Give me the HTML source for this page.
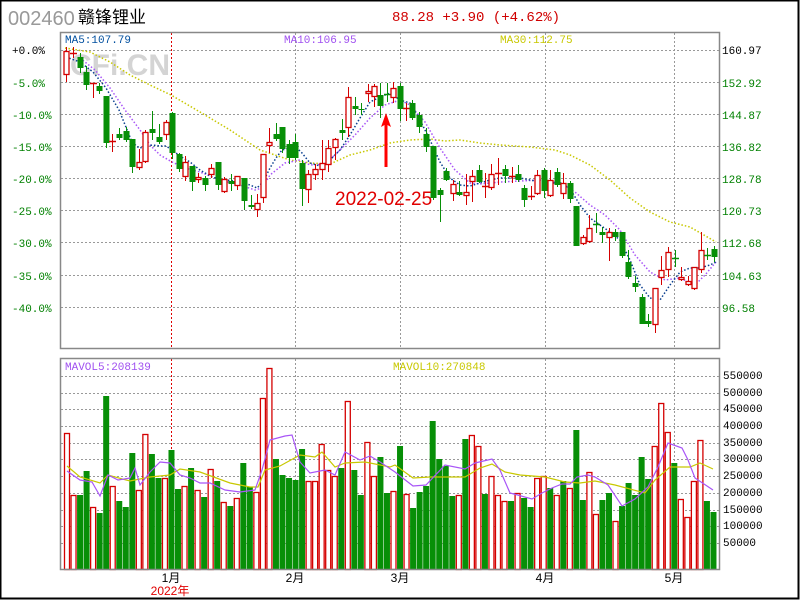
<!DOCTYPE html>
<html><head><meta charset="utf-8"><style>
html,body{margin:0;padding:0;background:#fff;}
body{width:800px;height:600px;overflow:hidden;position:relative;font-family:"Liberation Mono",monospace;}
</style></head><body>
<svg id="s" width="800" height="600" style="position:absolute;left:0;top:0" xmlns="http://www.w3.org/2000/svg">
<rect x="0.5" y="0.5" width="798" height="598" fill="#fff" stroke="#000" stroke-width="2"/>
<g id="grid"></g>
<text x="70" y="75" font-family="Liberation Sans,sans-serif" font-weight="bold" font-size="30" fill="#d4d4d4">CFi.CN</text>
<g id="ma"></g>
<g id="c"></g>
<g id="v"></g>
<rect x="60.5" y="32.5" width="659" height="316" fill="none" stroke="#888" stroke-width="1.5"/>
<rect x="60.5" y="358.5" width="659" height="211" fill="none" stroke="#888" stroke-width="1.5"/>
<text x="335" y="205" font-family="Liberation Sans,sans-serif" font-size="19" fill="#e00000">2022-02-25</text>
<polygon points="386,113 381,127 384.5,125 384.5,167 387.5,167 387.5,125 391,127" fill="#ff0000"/>
<text x="65" y="43" font-size="11" fill="#004f9f">MA5:107.79</text>
<text x="284" y="43" font-size="11" fill="#a050f0">MA10:106.95</text>
<text x="500" y="43" font-size="11" fill="#c8c800">MA30:112.75</text>
<text x="65" y="370" font-size="11" fill="#a050f0">MAVOL5:208139</text>
<text x="393" y="370" font-size="11" fill="#c8c800">MAVOL10:270848</text>
<g font-size="11" fill="#008000">
<text x="12" y="54" fill="#000">+0.0%</text>
<text x="12" y="87">-5.0%</text>
<text x="12" y="119">-10.0%</text>
<text x="12" y="151">-15.0%</text>
<text x="12" y="183">-20.0%</text>
<text x="12" y="215">-25.0%</text>
<text x="12" y="247">-30.0%</text>
<text x="12" y="280">-35.0%</text>
<text x="12" y="312">-40.0%</text>
<text x="722" y="54" fill="#000">160.97</text>
<text x="722" y="87">152.92</text>
<text x="722" y="119">144.87</text>
<text x="722" y="151">136.82</text>
<text x="722" y="183">128.78</text>
<text x="722" y="215">120.73</text>
<text x="722" y="247">112.68</text>
<text x="722" y="280">104.63</text>
<text x="722" y="312">96.58</text>
</g>
<g font-size="11" fill="#000">
<text x="723" y="379">550000</text>
<text x="723" y="396">500000</text>
<text x="723" y="412">450000</text>
<text x="723" y="429">400000</text>
<text x="723" y="446">350000</text>
<text x="723" y="462">300000</text>
<text x="723" y="479">250000</text>
<text x="723" y="496">200000</text>
<text x="723" y="513">150000</text>
<text x="723" y="529">100000</text>
<text x="723" y="546">50000</text>
</g>
<g font-family="Liberation Sans,'Noto Sans CJK SC',sans-serif" font-size="12" fill="#000" text-anchor="middle">
<text x="171" y="582">1月</text>
<text x="295" y="582">2月</text>
<text x="400" y="582">3月</text>
<text x="545" y="582">4月</text>
<text x="674" y="582">5月</text>
<text x="170" y="595" fill="#e00000">2022年</text>
</g>
<text x="8" y="25" font-family="Liberation Sans,sans-serif" font-size="20" fill="#999">002460</text>
<text x="78" y="23" font-family="Liberation Sans,'Noto Sans CJK SC',sans-serif" font-size="17" fill="#000">赣锋锂业</text>
<text x="392" y="21" font-size="14" fill="#d00000">88.28 +3.90 (+4.62%)</text>
</svg>
<script>
var NS="http://www.w3.org/2000/svg";
function el(p,t,a){var e=document.createElementNS(NS,t);for(var k in a)e.setAttribute(k,a[k]);document.getElementById(p).appendChild(e);return e;}
var R="#d40000",G="#078f07";
[50,82,114,146,178,210,242,275,307].forEach(function(y){el("grid","line",{x1:61,x2:719,y1:y+.5,y2:y+.5,stroke:"#999","stroke-dasharray":"2,2"});});
[376,393,409,426,443,459,476,493,510,526,543].forEach(function(y){el("grid","line",{x1:61,x2:719,y1:y+.5,y2:y+.5,stroke:"#999","stroke-dasharray":"2,2"});});
[295,400,545,674].forEach(function(x){el("grid","line",{x1:x+.5,x2:x+.5,y1:33,y2:348,stroke:"#999","stroke-dasharray":"2,2"});el("grid","line",{x1:x+.5,x2:x+.5,y1:359,y2:569,stroke:"#999","stroke-dasharray":"2,2"});});
el("grid","line",{x1:171.5,x2:171.5,y1:33,y2:348,stroke:"#d00","stroke-dasharray":"2,2"});
el("grid","line",{x1:171.5,x2:171.5,y1:359,y2:569,stroke:"#d00","stroke-dasharray":"2,2"});
var C=[[66,51,74,47,82,1],[73,53,53,47,58,1],[80,57,68,53,73,0],[86,72,85,66,90,0],[93,83,83,83,98,1],[99,86,91,83,94,0],[106,96,143,96,148,0],[112,141,141,134,152,1],[119,134,138,128,140,0],[126,131,140,127,142,0],[132,139,167,139,173,0],[139,162,167,149,170,1],[145,132,161,130,163,1],[152,129,133,111,140,0],[159,137,142,124,144,0],[166,122,134,120,140,1],[172,113,153,112,159,0],[179,154,169,153,172,0],[185,162,176,156,181,1],[192,166,182,166,191,0],[198,177,179,173,183,1],[205,178,185,176,191,0],[211,168,174,164,178,1],[218,162,185,162,190,0],[224,179,191,177,193,1],[231,181,184,174,191,0],[237,176,185,176,190,1],[244,178,201,178,210,0],[251,205,207,195,209,0],[257,203,209,194,217,1],[263,154,197,154,203,1],[269,142,145,128,153,1],[276,134,139,123,141,0],[282,127,149,127,153,0],[289,144,158,140,164,0],[295,142,158,134,160,0],
[302,163,189,160,206,0],[308,174,189,170,203,1],[315,169,174,164,180,1],[322,163,169,140,180,1],[328,148,164,140,172,1],[335,139,147,138,160,1],[342,130,133,119,140,0],[348,97,127,87,137,1],[355,106,109,97,115,0],[361,109,110,103,115,0],[368,91,93,84,102,1],[374,86,96,84,107,1],[380,95,106,83,118,0],[387,94,94,83,102,0],[393,88,97,82,103,1],[400,86,109,83,121,0],[406,108,108,103,121,1],[412,103,118,100,120,0],[419,115,127,112,133,0],[426,134,147,128,152,0],[433,146,198,146,200,0],[440,190,195,188,222,0],[446,171,180,168,181,0],[453,184,193,180,201,1],[459,192,195,181,196,0],[466,192,195,174,205,1],[472,176,181,170,202,1],[479,170,182,165,183,0],[485,186,186,173,198,1],[491,174,187,164,190,1],[498,173,173,158,185,1],[505,169,176,165,183,0],[512,176,176,167,183,1],[518,174,180,165,182,0],[524,188,200,185,207,0],[531,196,196,186,200,1],[537,175,193,170,195,1],[544,170,191,168,198,0],[550,180,195,170,197,1],[557,172,185,168,187,0],
[563,183,193,173,199,1],[570,183,199,181,203,0],[576,206,246,206,246,0],[583,237,243,235,245,1],[589,228,241,215,243,1],[596,224,224,213,233,0],[602,232,235,227,243,0],[609,232,237,228,261,1],[615,232,237,229,241,0],[622,232,256,232,258,0],[628,262,277,250,279,0],[635,283,287,276,292,0],[642,297,324,294,324,0],[648,321,324,314,327,0],[655,288,324,288,333,1],[661,270,277,256,285,1],[668,252,269,247,277,1],[675,258,258,250,267,0],[681,277,279,267,281,1],[688,281,284,276,286,1],[694,267,288,267,290,1],[701,250,269,232,273,1],[707,255,255,248,260,0],[714,249,257,246,262,0]];
C.forEach(function(c){var col=c[5]?R:G;
 if(c[5]){el("c","line",{x1:c[0]+.5,x2:c[0]+.5,y1:c[3],y2:c[1],stroke:col});el("c","line",{x1:c[0]+.5,x2:c[0]+.5,y1:c[2],y2:c[4],stroke:col});}
 else el("c","line",{x1:c[0]+.5,x2:c[0]+.5,y1:c[3],y2:c[4],stroke:col});
 var h=c[2]-c[1];
 if(h<1){el("c","line",{x1:c[0]-3,x2:c[0]+4,y1:c[1]+.5,y2:c[1]+.5,stroke:col,"stroke-width":1.5});}
 else if(c[5])el("c","rect",{x:c[0]-2,y:c[1]+.5,width:5,height:h,fill:"#fff",stroke:col,"stroke-width":1.3});
 else el("c","rect",{x:c[0]-2.5,y:c[1],width:6,height:h,fill:col});
});
function pl(p,pts,col,dash,w){el(p,"polyline",{points:pts.map(function(q){return q.join(",")}).join(" "),fill:"none",stroke:col,"stroke-width":w||1,"stroke-dasharray":dash||"none"});}
pl("ma",[[65,48],[90,52],[110,62],[130,75],[150,85],[171,95],[200,112],[230,130],[260,150],[290,160],[310,163],[330,164],[350,155],[370,150],[390,143],[410,140],[430,139],[445,141],[460,140],[480,143],[500,145],[530,147],[555,150],[570,155],[590,165],[610,180],[630,198],[650,212],[670,222],[690,227],[716,242]],"#c8c800","1.5,2",1.5);
pl("ma",[[80,58],[95,70],[110,88],[125,110],[140,130],[150,145],[160,155],[172,162],[185,168],[200,172],[220,180],[240,185],[255,190],[262,188],[270,175],[285,163],[300,160],[310,165],[325,164],[340,150],[355,135],[370,118],[385,105],[400,100],[410,105],[425,122],[440,148],[455,170],[470,183],[480,184],[500,182],[520,181],[540,180],[560,183],[575,192],[590,205],[605,215],[620,230],[635,255],[650,272],[665,280],[680,278],[695,285],[705,275],[716,262]],"#a855f7","1.5,2",1.5);
pl("ma",[[66,57],[80,62],[93,72],[106,88],[119,110],[132,142],[139,148],[145,147],[152,145],[160,146],[166,146],[172,150],[180,156],[190,162],[200,170],[212,177],[224,180],[237,181],[250,185],[257,188],[263,182],[270,168],[276,158],[282,150],[290,148],[296,147],[302,153],[310,163],[320,166],[330,160],[340,150],[350,135],[360,118],[370,102],[380,97],[390,93],[400,100],[410,103],[420,120],[430,140],[440,162],[450,178],[460,185],[470,186],[480,183],[490,180],[500,178],[510,178],[520,178],[530,180],[540,182],[550,183],[563,183],[572,192],[580,205],[590,218],[600,225],[610,232],[620,240],[630,260],[640,285],[650,298],[660,300],[670,285],[680,272],[690,268],[700,268],[710,265],[716,262]],"#0a3f8f","1.5,2",1.5);
var VT=[433,495,495,471,507,513,396,486,501,507,453,490,434,454,478,478,450,489,486,468,490,497,469,481,502,506,498,463,487,492,398,368,459,475,478,480,449,481,481,444,470,476,468,401,470,495,442,476,457,493,491,446,494,508,492,486,421,459,466,496,495,439,435,446,494,476,495,501,501,493,498,507,478,476,488,495,481,488,430,500,472,514,500,493,521,506,483,495,457,479,446,403,432,463,499,517,481,440,501,512];
var VC="rrggrggrggg rrggrggrgrgrgrgrggrrrgggggrrrrrgrggrrggrg".replace(/ /g,"")+"rgggggggrgrrgrrrgrggrrgrgrggrrggrgggggrrrgrrrrgg";
VT.forEach(function(t,i){var x=67+6.53*i;var up=VC[i]=="r";
 if(up)el("v","rect",{x:x-2.5,y:t+.5,width:5,height:569-t,fill:"#fff",stroke:R,"stroke-width":1.3});
 else el("v","rect",{x:x-3,y:t,width:6,height:570-t,fill:G});});
pl("v",[[67,466],[80,477],[100,483],[108,475],[130,481],[150,477],[170,475],[180,469],[200,472],[230,483],[250,487],[258,487],[265,470],[280,466],[300,455],[315,457],[322,452],[335,467],[345,463],[365,462],[390,467],[395,465],[413,478],[430,477],[445,477],[465,477],[480,468],[492,464],[505,472],[520,475],[545,477],[565,482],[580,483],[595,481],[615,485],[645,493],[655,480],[670,467],[690,467],[700,463],[713,469]],"#c8c800",null,1.2);
pl("v",[[67,471],[80,480],[92,482],[100,496],[108,475],[118,480],[130,478],[135,468],[140,485],[150,472],[160,462],[170,463],[180,475],[190,478],[200,483],[210,483],[225,490],[240,492],[255,490],[262,470],[270,440],[285,436],[292,435],[300,462],[310,473],[325,470],[335,475],[345,452],[360,460],[370,456],[380,462],[395,472],[413,486],[426,485],[445,465],[465,469],[475,463],[492,459],[500,470],[510,493],[532,499],[542,493],[552,488],[562,484],[570,484],[577,477],[588,475],[595,477],[608,485],[622,506],[635,499],[648,487],[658,467],[668,443],[682,448],[688,460],[695,478],[713,490]],"#a855f7",null,1.2);
</script>
</body></html>
